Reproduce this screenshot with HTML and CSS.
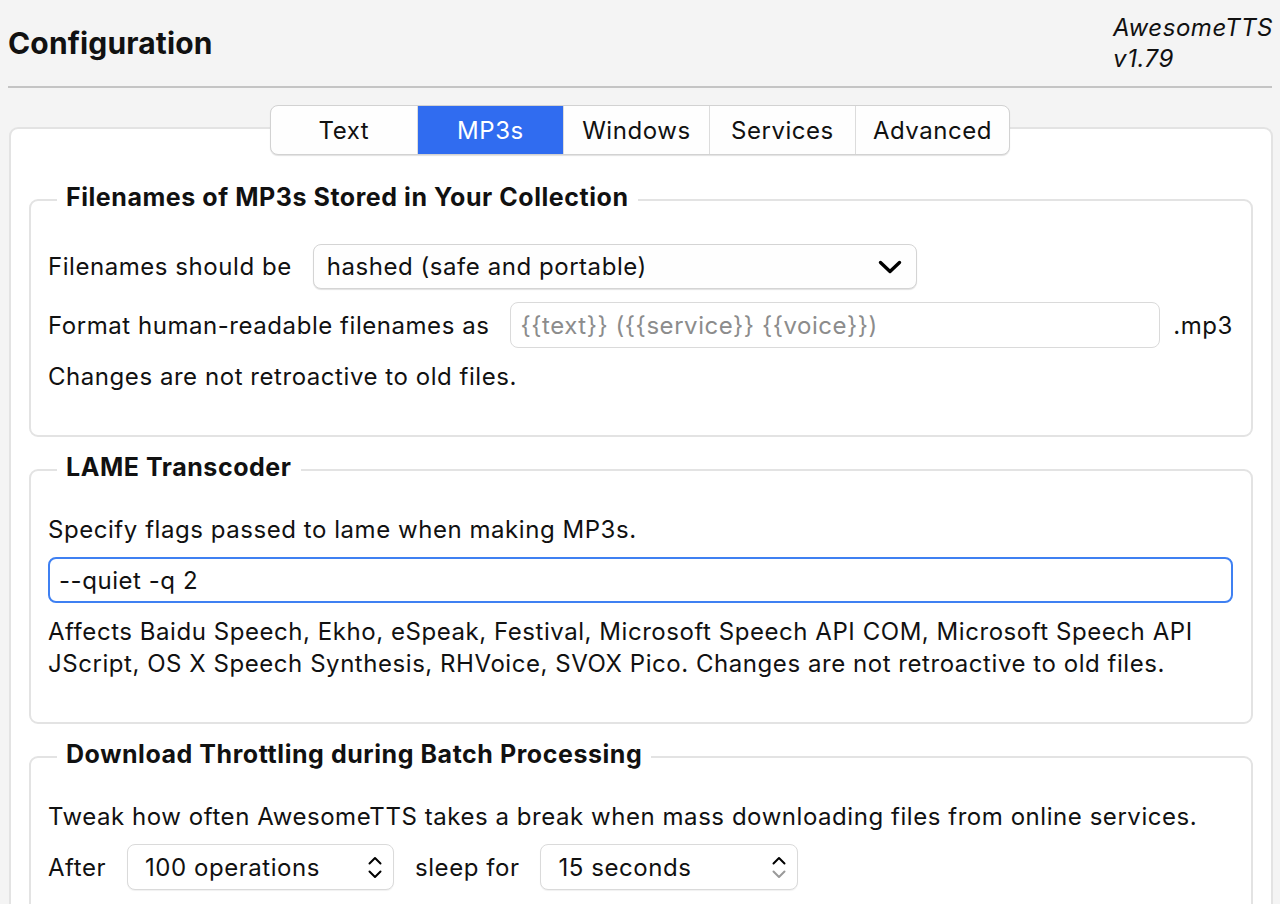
FILE: index.html
```html
<!DOCTYPE html>
<html lang="en">
<head>
<meta charset="utf-8">
<title>AwesomeTTS Configuration</title>
<link rel="stylesheet" href="styles.css">
</head>
<body>
<header class="header">
  <h1 class="title">Configuration</h1>
  <div class="version">AwesomeTTS<br>v1.79</div>
</header>
<hr class="rule">
<nav class="tabs">
  <div class="tab">Text</div>
  <div class="tab active">MP3s</div>
  <div class="tab">Windows</div>
  <div class="tab">Services</div>
  <div class="tab">Advanced</div>
</nav>
<main class="panel">
  <fieldset class="group">
    <legend>Filenames of MP3s Stored in Your Collection</legend>
    <div class="row">
      <span class="label">Filenames should be</span>
      <div class="combo">
        <span>hashed (safe and portable)</span>
        <svg class="chev" width="24" height="14" viewBox="0 0 24 14"><path d="M2.5 2.5 L12 11.5 L21.5 2.5" fill="none" stroke="#000" stroke-width="3.4" stroke-linecap="round" stroke-linejoin="round"/></svg>
      </div>
    </div>
    <div class="row">
      <span class="label">Format human-readable filenames as</span>
      <div class="field placeholder">{{text}} ({{service}} {{voice}})</div>
      <span class="suffix">.mp3</span>
    </div>
    <p class="text">Changes are not retroactive to old files.</p>
  </fieldset>

  <fieldset class="group">
    <legend>LAME Transcoder</legend>
    <p class="text">Specify flags passed to lame when making MP3s.</p>
    <div class="field focus">--quiet -q 2</div>
    <p class="text">Affects Baidu Speech, Ekho, eSpeak, Festival, Microsoft Speech API COM, Microsoft Speech API JScript, OS X Speech Synthesis, RHVoice, SVOX Pico. Changes are not retroactive to old files.</p>
  </fieldset>

  <fieldset class="group">
    <legend>Download Throttling during Batch Processing</legend>
    <p class="text">Tweak how often AwesomeTTS takes a break when mass downloading files from online services.</p>
    <div class="row">
      <span class="label">After</span>
      <div class="spin">
        <span>100 operations</span>
        <span class="arrows">
          <svg width="14" height="9" viewBox="0 0 14 9"><path d="M1.5 7.5 L7 2 L12.5 7.5" fill="none" stroke="#000" stroke-width="2" stroke-linecap="round" stroke-linejoin="round"/></svg>
          <svg width="14" height="9" viewBox="0 0 14 9"><path d="M1.5 1.5 L7 7 L12.5 1.5" fill="none" stroke="#000" stroke-width="2" stroke-linecap="round" stroke-linejoin="round"/></svg>
        </span>
      </div>
      <span class="label">sleep for</span>
      <div class="spin short">
        <span>15 seconds</span>
        <span class="arrows">
          <svg width="14" height="9" viewBox="0 0 14 9"><path d="M1.5 7.5 L7 2 L12.5 7.5" fill="none" stroke="#000" stroke-width="2" stroke-linecap="round" stroke-linejoin="round"/></svg>
          <svg width="14" height="9" viewBox="0 0 14 9"><path d="M1.5 1.5 L7 7 L12.5 1.5" fill="none" stroke="#9a9a9a" stroke-width="2" stroke-linecap="round" stroke-linejoin="round"/></svg>
        </span>
      </div>
    </div>
  </fieldset>
</main>
</body>
</html>
```
FILE: styles.css
```css
* { box-sizing: border-box; }
html, body { height: 100%; }
body {
  margin: 0;
  display: flex;
  flex-direction: column;
  background: #f4f4f4;
  font-family: Inter, "Liberation Sans", sans-serif;
  font-size: 24px;
  letter-spacing: 0.55px;
  color: #111;
  overflow: hidden;
}
.header {
  display: flex;
  justify-content: space-between;
  align-items: center;
  padding: 12px 7px 12px 8px;
  height: 86px;
  flex: none;
}
.title {
  margin: 0;
  font-size: 30px;
  font-weight: 700;
  letter-spacing: 0.15px;
}
.version {
  font-style: italic;
  line-height: 31px;
  font-size: 24px;
}
.rule {
  flex: none;
  width: calc(100% - 16px);
  margin: 0 8px;
  border: 0;
  height: 2px;
  background: #c4c4c4;
}
.tabs {
  position: relative;
  z-index: 1;
  flex: none;
  display: flex;
  align-self: center;
  height: 50px;
  margin: 17px 0 -28px;
  background: #fefefe;
  border: 1px solid #d2d2d2;
  border-radius: 8px;
  box-shadow: 0 1px 1px rgba(0,0,0,0.12);
  overflow: hidden;
}
.tab {
  min-width: 146px;
  padding: 0 17px;
  display: flex;
  align-items: center;
  justify-content: center;
  border-left: 1px solid #dcdcdc;
}
.tab:first-child { border-left: 0; }
.tab.active {
  background: #306cf0;
  color: #fff;
}
.panel {
  flex: 1;
  min-height: 0;
  overflow: hidden;
  margin: 0 7px 0 9px;
  background: #fff;
  border: 2px solid #e3e3e3;
  border-bottom: 0;
  border-radius: 9px 9px 0 0;
  padding: 53px 18px 0;
}
.group {
  margin: 0 0 15px;
  border: 2px solid #e3e3e3;
  border-radius: 9px;
  padding: 26px 18px 42px 17px;
  display: flex;
  flex-direction: column;
  gap: 13px;
}
.group legend {
  font-size: 25px;
  font-weight: 700;
  letter-spacing: 0.55px;
  line-height: 30px;
  padding: 0 9px 6px;
  margin-left: 9px;
}
.row {
  display: flex;
  align-items: center;
  gap: 21px;
}
.text {
  margin: 0;
  line-height: 32px;
}
.text + .field,
.text + .row { margin-top: -2px; }
.combo {
  width: 604px;
  height: 45px;
  display: flex;
  align-items: center;
  justify-content: space-between;
  padding: 0 14px 0 13px;
  border: 1px solid #d4d4d4;
  border-radius: 8px;
  background: #fefefe;
  box-shadow: 0 1px 1px rgba(0,0,0,0.12);
}
.field {
  height: 46px;
  display: flex;
  align-items: center;
  padding: 0 9px;
  border: 1px solid #dadada;
  border-radius: 8px;
  background: #fff;
}
.row .field { flex: 1; }
.placeholder { color: #8c8c8c; }
.suffix { margin-left: -8px; }
.field.focus {
  border: 2px solid #3f80f2;
}
.spin {
  width: 267px;
  height: 46px;
  display: flex;
  align-items: center;
  justify-content: space-between;
  padding: 0 11px 0 17px;
  border: 1px solid #dadada;
  border-radius: 8px;
  background: #fff;
  box-shadow: 0 1px 1px rgba(0,0,0,0.06);
}
.spin.short { width: 258px; }
.arrows {
  display: flex;
  flex-direction: column;
  gap: 5px;
}
.arrows svg { display: block; }
```
